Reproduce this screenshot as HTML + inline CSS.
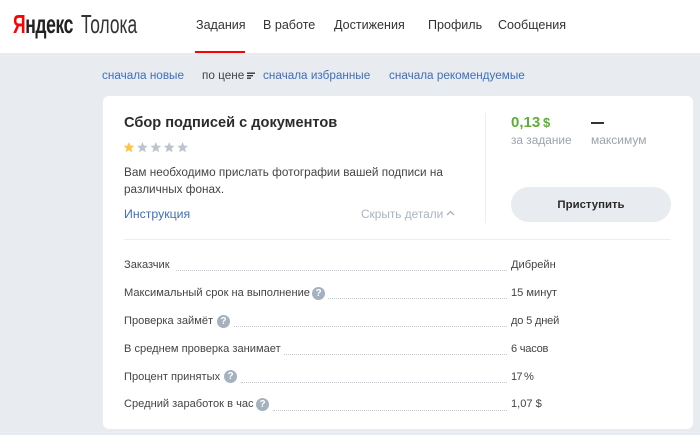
<!DOCTYPE html>
<html lang="ru"><head><meta charset="utf-8"><style>
*{box-sizing:border-box}
html,body{margin:0;padding:0}
body{width:700px;height:435px;overflow:hidden;background:#e8ebef;font-family:"Liberation Sans",sans-serif;position:relative;color:#333}
.t{position:absolute;white-space:nowrap;line-height:16px;font-size:12px}
.hd{position:absolute;left:0;top:0;width:700px;height:53px;background:#fff}
.u{position:absolute;left:195px;top:51px;width:50px;height:2px;background:#f00}
.n{font-size:12.55px;color:#333;top:17px}
.b{font-size:11.72px;color:#3f6fbc;top:68px}
.card{position:absolute;left:103px;top:96px;width:590px;height:333px;background:#fff;border-radius:6px}
.l{position:absolute;height:0;border-top:1px dotted #c3c9d1}
.q{position:absolute;width:13px;height:13px;border-radius:50%;background:#a5b1bf;color:#fff;font-size:10px;font-weight:bold;line-height:13px;text-align:center}
.r{font-size:11.1px;color:#444}
</style></head><body>
<div class="hd"></div>
<div class="t" style="left:13px;top:8px;font-size:26px;line-height:32px;font-weight:bold;transform-origin:left top;transform:scaleX(.675);letter-spacing:-.6px;color:#222"><span style="color:#f00">Я</span>ндекс</div>
<div class="t" style="left:81px;top:8px;font-size:26px;line-height:32px;transform-origin:left top;transform:scaleX(.668);color:#333">Толока</div>
<div class="t n" style="left:196px">Задания</div>
<div class="t n" style="left:263px">В работе</div>
<div class="t n" style="left:334px">Достижения</div>
<div class="t n" style="left:428px">Профиль</div>
<div class="t n" style="left:498px">Сообщения</div>
<div class="u"></div>

<div class="t b" style="left:102px">сначала новые</div>
<div class="t b" style="left:202px;color:#444">по цене</div>
<svg style="position:absolute;left:247px;top:72px" width="9" height="8"><path d="M0 0.5h8v1.4H0zM0 3h6v1.4H0zM0 5.5h4v1.4H0z" fill="#333"/></svg>
<div class="t b" style="left:263px">сначала избранные</div>
<div class="t b" style="left:389px">сначала рекомендуемые</div>

<div class="card"></div>
<div class="t" style="left:124px;top:115px;font-size:14.6px;font-weight:bold;color:#2b2b2b">Сбор подписей с документов</div>
<svg style="position:absolute;left:123px;top:141px" width="66" height="13" viewBox="0 0 66 13">
<path fill="#fdc543" d="M6 1l1.5 3.6 3.9.3-3 2.5.95 3.8L6 9.2 2.65 11.2l.95-3.8-3-2.5 3.9-.3z"/>
<path fill="#bcc5cd" transform="translate(13.4 0)" d="M6 1l1.5 3.6 3.9.3-3 2.5.95 3.8L6 9.2 2.65 11.2l.95-3.8-3-2.5 3.9-.3z"/>
<path fill="#bcc5cd" transform="translate(26.8 0)" d="M6 1l1.5 3.6 3.9.3-3 2.5.95 3.8L6 9.2 2.65 11.2l.95-3.8-3-2.5 3.9-.3z"/>
<path fill="#bcc5cd" transform="translate(40.2 0)" d="M6 1l1.5 3.6 3.9.3-3 2.5.95 3.8L6 9.2 2.65 11.2l.95-3.8-3-2.5 3.9-.3z"/>
<path fill="#bcc5cd" transform="translate(53.6 0)" d="M6 1l1.5 3.6 3.9.3-3 2.5.95 3.8L6 9.2 2.65 11.2l.95-3.8-3-2.5 3.9-.3z"/>
</svg>
<div class="t" style="left:124px;top:165px;font-size:11.75px;color:#444">Вам необходимо прислать фотографии вашей подписи на</div>
<div class="t" style="left:124px;top:182px;font-size:11.75px;color:#444">различных фонах.</div>
<div class="t" style="left:124px;top:206px;font-size:12.3px;color:#3f6fbc">Инструкция</div>
<div class="t" style="left:361px;top:206px;font-size:11.85px;color:#a9b4c0">Скрыть детали</div>
<svg style="position:absolute;left:446px;top:210px" width="9" height="6"><path d="M1 5l3.5-3.5L8 5" fill="none" stroke="#a9b4c0" stroke-width="1.3"/></svg>
<div style="position:absolute;left:485px;top:113px;width:1px;height:110px;background:#eceef1"></div>

<div class="t" style="left:511px;top:115px;font-size:15px;font-weight:bold;color:#5fae36">0,13</div>
<div class="t" style="left:543px;top:115px;font-size:13px;font-weight:bold;color:#5fae36">$</div>
<div style="position:absolute;left:591px;top:122px;width:13px;height:2px;background:#333"></div>
<div class="t" style="left:511px;top:132px;font-size:11.85px;color:#9aa3ae">за задание</div>
<div class="t" style="left:591px;top:132px;font-size:12px;color:#9aa3ae">максимум</div>
<div style="position:absolute;left:511px;top:187px;width:160px;height:35px;border-radius:18px;background:#e8ebef"></div>
<div class="t" style="left:511px;top:197px;width:160px;text-align:center;font-size:11.4px;font-weight:bold;color:#2b2b2b">Приступить</div>
<div style="position:absolute;left:124px;top:239px;width:547px;height:1px;background:#eceef1"></div>

<div class="t r" style="left:124px;top:257px">Заказчик</div>
<div class="l" style="left:176px;top:270px;width:331px"></div>
<div class="t r" style="left:511px;top:257px">Дибрейн</div>

<div class="t r" style="left:124px;top:285px">Максимальный срок на выполнение</div>
<div class="q" style="left:312px;top:287px">?</div>
<div class="l" style="left:328px;top:298px;width:179px"></div>
<div class="t r" style="left:511px;top:285px">15 минут</div>

<div class="t r" style="left:124px;top:313px">Проверка займёт</div>
<div class="q" style="left:217px;top:315px">?</div>
<div class="l" style="left:234px;top:326px;width:273px"></div>
<div class="t r" style="left:511px;top:313px;letter-spacing:-.2px">до 5 дней</div>

<div class="t r" style="left:124px;top:341px">В среднем проверка занимает</div>
<div class="l" style="left:284px;top:354px;width:223px"></div>
<div class="t r" style="left:511px;top:341px;letter-spacing:-.25px">6 часов</div>

<div class="t r" style="left:124px;top:369px">Процент принятых</div>
<div class="q" style="left:224px;top:370px">?</div>
<div class="l" style="left:241px;top:382px;width:266px"></div>
<div class="t r" style="left:511px;top:369px;letter-spacing:-.8px">17 %</div>

<div class="t r" style="left:124px;top:396px">Средний заработок в час</div>
<div class="q" style="left:256px;top:398px">?</div>
<div class="l" style="left:273px;top:410px;width:234px"></div>
<div class="t r" style="left:511px;top:396px">1,07 $</div>
</body></html>
